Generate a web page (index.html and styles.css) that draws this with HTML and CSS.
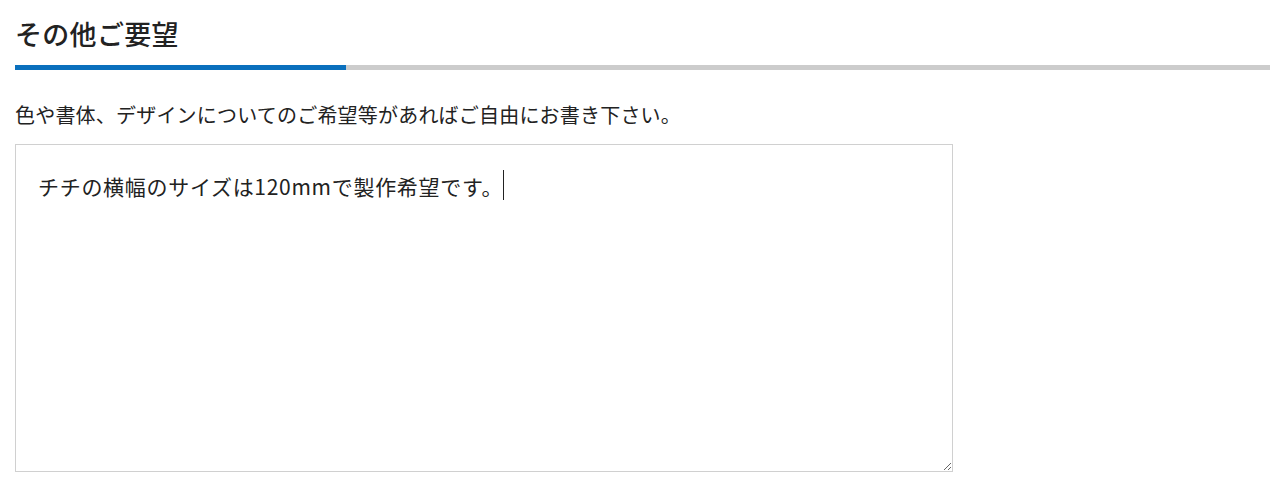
FILE: index.html
```html
<!DOCTYPE html>
<html lang="ja">
<head>
<meta charset="utf-8">
<link rel="stylesheet" href="styles.css">
</head>
<body>
<section class="section">
  <h2 class="title">その他ご要望</h2>
  <div class="rule"><span class="rule-accent"></span></div>
  <p class="lead">色や書体、デザインについてのご希望等があればご自由にお書き下さい。</p>
  <div class="field">
    <textarea class="textarea">チチの横幅のサイズは120mmで製作希望です。 </textarea>
    <span class="caret"></span>
  </div>
</section>
</body>
</html>
```
FILE: styles.css
```css
* { box-sizing: border-box; }
html, body { margin: 0; padding: 0; background: #fff; }
body {
  font-family: "Noto Sans CJK JP", "Noto Sans", sans-serif;
  color: #222;
}
.section { padding: 0 10px 0 15px; }
.title {
  margin: 0;
  padding-top: 14px;
  font-size: 27px;
  font-weight: 500;
  line-height: 40px;
  letter-spacing: 0.3px;
  color: #222;
}
.rule {
  margin-top: 11px;
  height: 5px;
  background: #cccccc;
  display: flex;
}
.rule-accent {
  width: 331px;
  background: #0a70bd;
}
.lead {
  margin: 30px 0 0;
  font-size: 20px;
  line-height: 30px;
  letter-spacing: 0.2px;
}
.field {
  position: relative;
  margin-top: 14px;
  width: 938px;
  height: 328px;
}
.textarea {
  display: block;
  width: 100%;
  height: 100%;
  border: 1px solid #d0d0d0;
  border-radius: 0;
  padding: 25px 22px;
  font-family: "Noto Sans CJK JP", "Noto Sans", sans-serif;
  font-size: 21px;
  line-height: 32px;
  letter-spacing: 0.7px;
  color: #222;
  resize: both;
  outline: none;
  background: #fff;
}
.caret {
  position: absolute;
  left: 488px;
  top: 26px;
  width: 1px;
  height: 30px;
  background: #222;
}
```
